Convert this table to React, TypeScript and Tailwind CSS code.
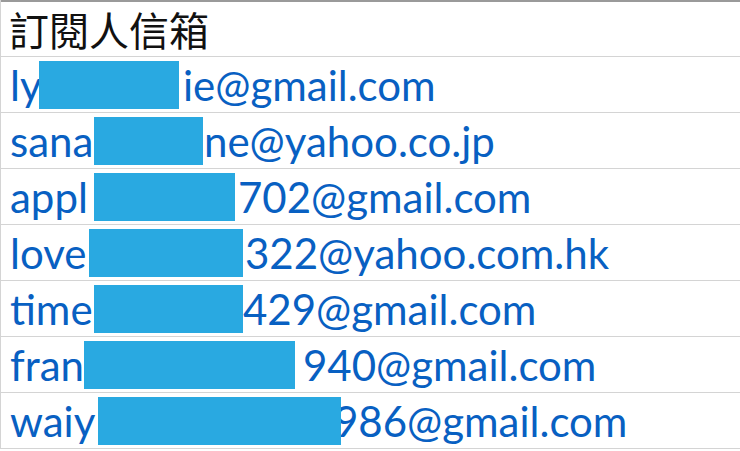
import React from "react";

type Row = { pre: string; preCls: string; boxCls: string; postCls: string; post: string };

const rows: Row[] = [
  { pre: "ly", preCls: "w-[29px]", boxCls: "w-[140px]", postCls: "ml-[4px]", post: "ie@gmail.com" },
  { pre: "sana", preCls: "w-[84px]", boxCls: "w-[109px]", postCls: "ml-[1px]", post: "ne@yahoo.co.jp" },
  { pre: "appl", preCls: "w-[84px]", boxCls: "w-[141px]", postCls: "ml-[3px]", post: "702@gmail.com" },
  { pre: "love", preCls: "w-[79px]", boxCls: "w-[154px]", postCls: "ml-[2px]", post: "322@yahoo.com.hk" },
  { pre: "time", preCls: "w-[84px]", boxCls: "w-[149px]", postCls: "ml-[0px]", post: "429@gmail.com" },
  { pre: "fran", preCls: "w-[74px]", boxCls: "w-[211px]", postCls: "ml-[8px]", post: "940@gmail.com" },
  { pre: "waiy", preCls: "w-[88px]", boxCls: "w-[243px]", postCls: "-ml-[7px]", post: "986@gmail.com" },
];

export default function App() {
  return (
    <div className="w-[740px] h-[451px] bg-white overflow-hidden font-['Lato','Noto_Sans_CJK_TC',sans-serif]">
      <div className="border-l border-[#d4d4d4]">
        <div className="h-[57px] border-t-2 border-t-[#9a9a9a] border-b border-b-[#d4d4d4] flex items-center pl-[8px]">
          <span className="text-[40px] leading-none text-[#111] font-['Noto_Sans_CJK_TC',sans-serif]">
            訂閱人信箱
          </span>
        </div>
        {rows.map((r, i) => (
          <div
            key={i}
            className="h-[56px] border-b border-[#d4d4d4] flex items-center pl-[9px] text-[42px] leading-none text-[#0860c2]"
          >
            <span className={`shrink-0 whitespace-nowrap ${r.preCls}`}>{r.pre}</span>
            <span className={`relative z-10 shrink-0 h-[48px] bg-[#29a9e1] mt-[1px] ${r.boxCls}`} />
            <span className={`shrink-0 whitespace-nowrap ${r.postCls}`}>{r.post}</span>
          </div>
        ))}
      </div>
    </div>
  );
}
